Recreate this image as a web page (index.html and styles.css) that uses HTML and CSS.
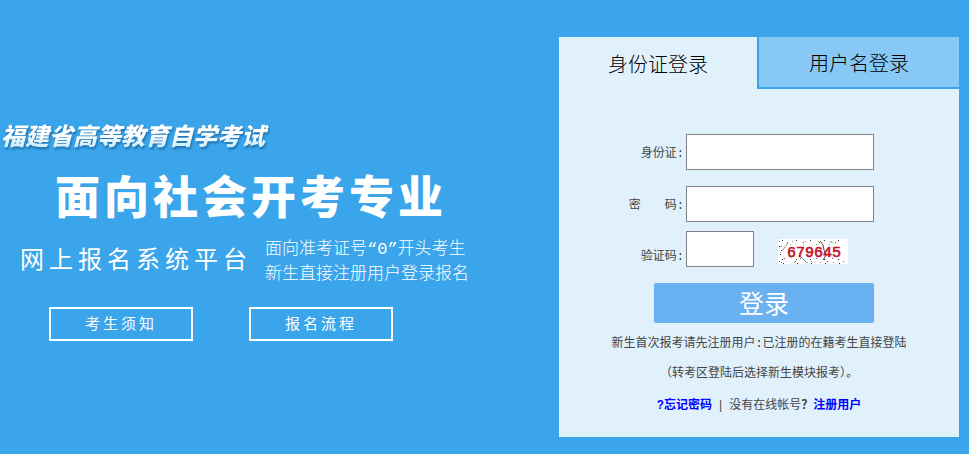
FILE: index.html
```html
<!DOCTYPE html>
<html lang="zh-CN">
<head>
    <meta charset="UTF-8" />
    <meta name="viewport" content="width=device-width, initial-scale=1.0" />
    <title>福建省高等教育自学考试</title>
    <link rel="stylesheet" href="styles.css">
</head>
<body>
    <div class="main">
        <!-- 左侧介绍 -->
        <div class="intro">
            <p class="brand">福建省高等教育自学考试</p>
            <h1 class="title">面向社会开考专业</h1>
            <div class="sub">
                <h2 class="sub-title">网上报名系统平台</h2>
                <p class="sub-text">面向准考证号“0”开头考生<br />新生直接注册用户登录报名</p>
            </div>
            <div class="links">
                <a href="#" class="link-btn">考生须知</a>
                <a href="#" class="link-btn">报名流程</a>
            </div>
        </div>

        <!-- 登录框 -->
        <div class="login">
            <div class="tabs">
                <button type="button" class="tab active">身份证登录</button>
                <button type="button" class="tab">用户名登录</button>
            </div>
            <form id="login_form" name="login_form" class="login-form">
                <div class="row">
                    <label for="id_card">身份证:</label>
                    <input type="text" name="id_card" id="id_card" class="text-input" />
                </div>
                <div class="row">
                    <label for="password">密　　码:</label>
                    <input type="password" name="password" id="password" class="text-input" />
                </div>
                <div class="row row-code">
                    <label for="code">验证码:</label>
                    <input type="text" name="code" id="code" class="text-input code-input" />
                    <svg class="captcha" width="70" height="25" viewBox="0 0 70 25">
                        <rect width="70" height="25" fill="#fff" />
                        <g fill="none" stroke-width="1">
                            <path stroke="#b78a86" d="M4 12l6-8M2 8l2-1" />
                            <path stroke="#3fa866" d="M21 16l7 7" />
                            <path stroke="#70304f" d="M42 2l3 4l1 5l2 5l-3 5" />
                            <path stroke="#a8d0aa" d="M51 3l5 1M10 17l4 2" />
                            <path stroke="#333" stroke-dasharray="1 13" d="M4 1.5h64M1 7.5h9M2 15.5h9M4 20.5h60M5 24.5h62" />
                            <path stroke="#a83c8c" stroke-dasharray="1 15" d="M9 3.5h60M3 11.5h6M6 19.5h60M1 22.5h66" />
                            <path stroke="#7ba66c" stroke-dasharray="1 12" d="M1 2.5h60M2 13.5h8M3 23.5h64M12 5.5h48" />
                        </g>
                        <text x="9" y="18" class="captcha-text">679645</text>
                    </svg>
                </div>
                <button type="submit" class="submit">登录</button>
                <p class="tip">新生首次报考请先注册用户:已注册的在籍考生直接登陆</p>
                <p class="tip">（转考区登陆后选择新生模块报考）。</p>
                <p class="tip tip-links"><a href="#">?忘记密码</a><span class="bar">|</span>没有在线帐号<b>？</b><a href="#">注册用户</a></p>
            </form>
        </div>
    </div>
</body>
</html>
```
FILE: styles.css
```css
* {
    box-sizing:border-box;
}
body {
    margin:0;
    background:#3aa5eb;
    color:#444;
    font-family:"Liberation Mono", "Noto Sans CJK SC", monospace;
    font-size:12px;
}
h1, h2, p {
    margin:0;
}
button {
    padding:0;
    border:none;
    font-family:"Noto Sans CJK SC", sans-serif;
    cursor:pointer;
}
.main {
    display:flex;
    justify-content:space-between;
    align-items:flex-start;
    padding:37px 10px 17px 0;
}

/* 左侧 */
.intro {
    padding-top:83px;
    color:#fff;
    font-family:"Noto Sans CJK SC", sans-serif;
    white-space:nowrap;
}
.brand {
    padding-left:1px;
    background:linear-gradient(#fff 50%, #c9ecfb 90%);
    -webkit-background-clip:text;
    background-clip:text;
    color:transparent;
    filter:drop-shadow(1px 2px 1px #1c6fab);
    font-size:24px;
    font-weight:900;
    font-style:italic;
    line-height:30px;
}
.title {
    margin-top:21px;
    padding-left:55px;
    font-size:45px;
    font-weight:900;
    letter-spacing:4px;
    line-height:48px;
}
.sub {
    display:flex;
    align-items:flex-start;
    gap:13px;
    margin-top:18px;
    padding-left:20px;
}
.sub-title {
    font-size:24px;
    font-weight:400;
    letter-spacing:5px;
    line-height:42px;
}
.sub-text {
    font-family:"Liberation Mono", "Noto Sans CJK SC", monospace;
    font-size:17px;
    font-weight:300;
    line-height:25px;
}
.links {
    display:flex;
    gap:56px;
    margin-top:20px;
    padding-left:49px;
}
.link-btn {
    width:144px;
    padding-bottom:2px;
    border:2px solid #fff;
    color:#fff;
    font-size:15px;
    letter-spacing:3px;
    line-height:28px;
    text-align:center;
    text-decoration:none;
}

/* 登录框 */
.login {
    flex:0 0 400px;
    padding-bottom:16px;
    background:#e1f1fc;
}
.tabs {
    display:flex;
}
.tab {
    flex:1;
    height:52px;
    border-left:2px solid #3aa5eb;
    border-bottom:2px solid #3aa5eb;
    background:#88c8f4;
    color:#000;
    font-size:20px;
    font-weight:300;
}
.tab.active {
    flex:0 0 198px;
    border:none;
    background:#e1f1fc;
}
.login-form {
    padding-top:45px;
}
.row {
    display:flex;
    align-items:center;
    margin-bottom:16px;
}
.row label {
    width:125px;
    margin-right:2px;
    padding-top:4px;
    line-height:20px;
    text-align:right;
}
.text-input {
    width:188px;
    height:36px;
    padding:0 6px;
    border:1px solid #848484;
    background:#fff;
}
.row-code {
    margin-top:-7px;
}
.row-code label {
    align-self:flex-end;
}
.code-input {
    width:68px;
}
.captcha {
    margin-top:4px;
    margin-left:24px;
}
.captcha-text {
    fill:#c4122a;
    stroke:#c4122a;
    stroke-width:0.6;
    font-family:"Liberation Mono", monospace;
    font-size:15px;
}
.submit {
    display:block;
    width:220px;
    height:40px;
    margin:0 0 6px 95px;
    padding-bottom:2px;
    border-radius:2px;
    background:#6ab1f2;
    color:#fff;
    font-size:25px;
    line-height:38px;
}
.tip {
    line-height:30px;
    text-align:center;
}
.tip-links {
    margin-top:2px;
}
.tip a {
    color:#00f;
    font-weight:700;
    text-decoration:none;
}
.bar {
    padding:0 5px;
}
```
